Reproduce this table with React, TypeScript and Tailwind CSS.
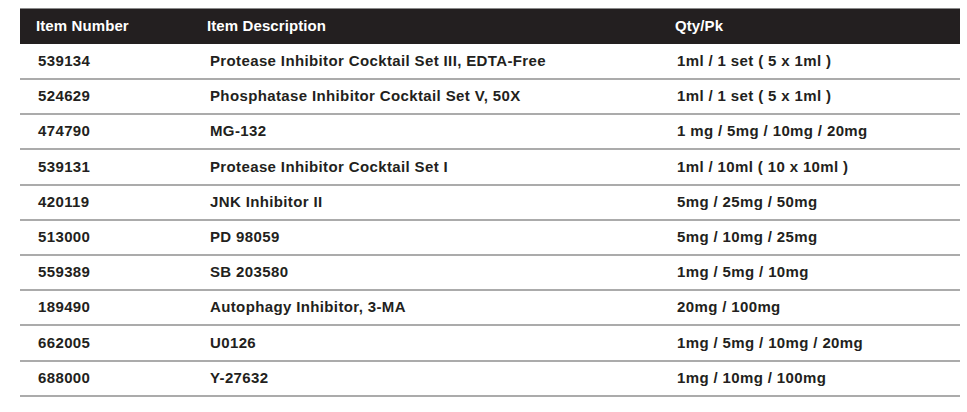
import React from 'react';

type Item = {
  number: string;
  description: string;
  qty: string;
  tall?: boolean;
};

const items: Item[] = [
  { number: '539134', description: 'Protease Inhibitor Cocktail Set III, EDTA-Free', qty: '1ml / 1 set ( 5 x 1ml )', tall: true },
  { number: '524629', description: 'Phosphatase Inhibitor Cocktail Set V, 50X', qty: '1ml / 1 set ( 5 x 1ml )' },
  { number: '474790', description: 'MG-132', qty: '1 mg / 5mg / 10mg / 20mg' },
  { number: '539131', description: 'Protease Inhibitor Cocktail Set I', qty: '1ml / 10ml ( 10 x 10ml )', tall: true },
  { number: '420119', description: 'JNK Inhibitor II', qty: '5mg / 25mg / 50mg' },
  { number: '513000', description: 'PD 98059', qty: '5mg / 10mg / 25mg' },
  { number: '559389', description: 'SB 203580', qty: '1mg / 5mg / 10mg' },
  { number: '189490', description: 'Autophagy Inhibitor, 3-MA', qty: '20mg / 100mg' },
  { number: '662005', description: 'U0126', qty: '1mg / 5mg / 10mg / 20mg', tall: true },
  { number: '688000', description: 'Y-27632', qty: '1mg / 10mg / 100mg' },
];

const App: React.FC = () => {
  return (
    <div className="w-[967px] h-[412px] bg-white pt-2 pl-5 font-['Liberation_Sans',Arial,sans-serif] font-bold text-[15px] tracking-[0.37px]">
      <div className="w-[940px]">
        <div className="flex items-center h-9 bg-[#231f20] text-white border-t border-[#8a8a8a] tracking-[0.1px]">
          <div className="w-[187px] pl-4">Item Number</div>
          <div className="w-[468px]">Item Description</div>
          <div className="flex-1">Qty/Pk</div>
        </div>
        {items.map((item) => (
          <div
            key={item.number}
            className={`flex items-center border-b-2 border-[#ababab] text-[#231f20] ${item.tall ? 'h-9' : 'h-[35px]'}`}
          >
            <div className="w-[190px] pl-[18px]">{item.number}</div>
            <div className="w-[467px]">{item.description}</div>
            <div className="flex-1">{item.qty}</div>
          </div>
        ))}
      </div>
    </div>
  );
};

export default App;
